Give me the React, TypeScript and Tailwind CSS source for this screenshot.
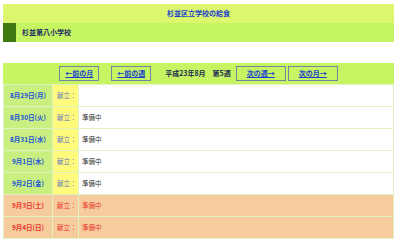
const font = { fontFamily: '"Noto Sans CJK JP", "Noto Sans", sans-serif' };

const days = [
  { date: '8月29日(月)', menu: '', weekend: false },
  { date: '8月30日(火)', menu: '準備中', weekend: false },
  { date: '8月31日(水)', menu: '準備中', weekend: false },
  { date: '9月1日(木)', menu: '準備中', weekend: false },
  { date: '9月2日(金)', menu: '準備中', weekend: false },
  { date: '9月3日(土)', menu: '準備中', weekend: true },
  { date: '9月4日(日)', menu: '準備中', weekend: true },
];

function NavButton({ label, w }: { label: string; w: string }) {
  return (
    <button className={`${w} h-[15px] flex items-center justify-center border border-[#7584a0] bg-[#c6f462] text-[7px] font-bold text-[#1a3fd0] underline`}>
      {label}
    </button>
  );
}

export default function App() {
  return (
    <div className="w-[400px] h-[251px] bg-white overflow-hidden pt-[4px] pl-[3px]" style={font}>
      {/* Header */}
      <div className="w-[391px] h-[19px] bg-[#dcf66e] flex items-center justify-center">
        <span className="text-[7px] font-bold text-[#1a3fd0]">杉並区立学校の給食</span>
      </div>
      <div className="w-[391px] h-[19px] bg-[#c6f562] flex items-center">
        <div className="w-[13px] h-full bg-[#3f7a10]" />
        <span className="ml-[6px] text-[7px] font-bold text-[#1c2a60]">杉並第八小学校</span>
      </div>

      {/* Week nav */}
      <div className="mt-[21px] w-[391px] h-[21px] bg-[#c6f462] flex items-center justify-center">
        <NavButton label="←前の月" w="w-[40px]" />
        <div className="w-[12px]" />
        <NavButton label="←前の週" w="w-[40px]" />
        <span className="ml-[14px] mr-[5px] text-[7px] font-bold text-[#1c2a50] whitespace-pre">平成23年8月　第5週</span>
        <NavButton label="次の週→" w="w-[50px]" />
        <div className="w-[2px]" />
        <NavButton label="次の月→" w="w-[50px]" />
      </div>

      {/* Days */}
      <div className="w-[391px] border-x border-b border-[#dff2bf]">
        {days.map(d => (
          <div
            key={d.date}
            className={`flex h-[22px] border-t border-[#dff2bf] ${d.weekend ? 'bg-[#f6cb9d]' : 'bg-white'}`}
          >
            <div className={`w-[49px] flex items-center justify-center text-[6.5px] font-bold border-r border-[#dff2bf] ${d.weekend ? 'text-[#e8382c]' : 'bg-[#c8ef80] text-[#2350d8]'}`}>
              {d.date}
            </div>
            <div className={`w-[26px] flex items-center pl-[4px] text-[6.5px] border-r border-[#dff2bf] ${d.weekend ? 'text-[#e8382c]' : 'bg-[#fff97c] text-[#6a78c0]'}`}>
              献立：
            </div>
            <div className={`flex-1 flex items-center pl-[3px] text-[6.5px] ${d.weekend ? 'text-[#e8382c]' : 'text-[#333333]'}`}>
              {d.menu}
            </div>
          </div>
        ))}
      </div>
    </div>
  );
}
